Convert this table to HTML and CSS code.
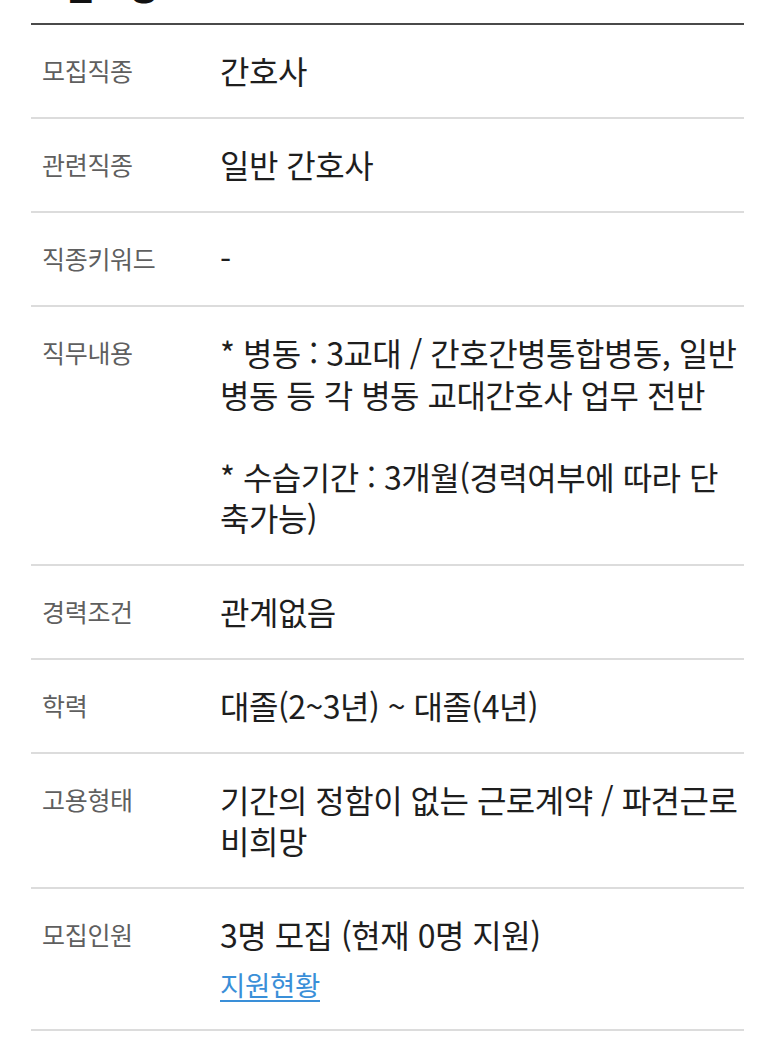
FILE: index.html
```html
<!DOCTYPE html>
<html lang="ko">
<head>
<meta charset="utf-8">
<title>모집요강</title>
<link rel="stylesheet" href="styles.css">
</head>
<body>
<section class="recruit">
  <h2 class="recruit-title">모집요강</h2>
  <dl class="recruit-list">
    <div class="row">
      <dt class="label">모집직종</dt>
      <dd class="value">간호사</dd>
    </div>
    <div class="row">
      <dt class="label">관련직종</dt>
      <dd class="value">일반 간호사</dd>
    </div>
    <div class="row">
      <dt class="label">직종키워드</dt>
      <dd class="value">-</dd>
    </div>
    <div class="row">
      <dt class="label">직무내용</dt>
      <dd class="value">* 병동 : 3교대 / 간호간병통합병동, 일반 병동 등 각 병동 교대간호사 업무 전반<br><br>* 수습기간 : 3개월(경력여부에 따라 단축가능)</dd>
    </div>
    <div class="row">
      <dt class="label">경력조건</dt>
      <dd class="value">관계없음</dd>
    </div>
    <div class="row">
      <dt class="label">학력</dt>
      <dd class="value">대졸(2~3년) ~ 대졸(4년)</dd>
    </div>
    <div class="row">
      <dt class="label">고용형태</dt>
      <dd class="value">기간의 정함이 없는 근로계약 / 파견근로 비희망</dd>
    </div>
    <div class="row">
      <dt class="label">모집인원</dt>
      <dd class="value">3명 모집 (현재 0명 지원)<a class="status-link" href="#">지원현황</a></dd>
    </div>
  </dl>
</section>
</body>
</html>
```

FILE: styles.css
```css
html, body {
  margin: 0;
  padding: 0;
  background: #ffffff;
}

body {
  font-family: "Noto Sans CJK KR", "Noto Sans", sans-serif;
  color: #1e1e1e;
}

.recruit {
  padding: 0 29px 0 31px;
}

.recruit-title {
  margin: -36px 0 0 0;
  font-size: 35px;
  line-height: 42px;
  font-weight: 700;
  color: #111111;
  padding-bottom: 17px;
  border-bottom: 2px solid #4a4a4a;
}

.recruit-list {
  margin: 0;
  padding: 0;
}

.row {
  display: flex;
  align-items: flex-start;
  padding: 25.4px 0 25.4px 11px;
  border-bottom: 2px solid #dcdcdc;
}

.label {
  flex: 0 0 178px;
  margin: 0;
  font-size: 25px;
  line-height: 41.2px;
  letter-spacing: -0.3px;
  color: #5f5f5f;
}

.value {
  flex: 1 1 auto;
  min-width: 0;
  margin: 0;
  font-size: 32px;
  line-height: 41.2px;
  letter-spacing: -0.5px;
  color: #1e1e1e;
  word-break: break-all;
}

.status-link {
  display: block;
  margin-top: 8px;
  font-size: 27.5px;
  line-height: 40px;
  letter-spacing: -0.3px;
  color: #3a8fd8;
  text-decoration: underline;
  text-underline-offset: 4px;
}
```
